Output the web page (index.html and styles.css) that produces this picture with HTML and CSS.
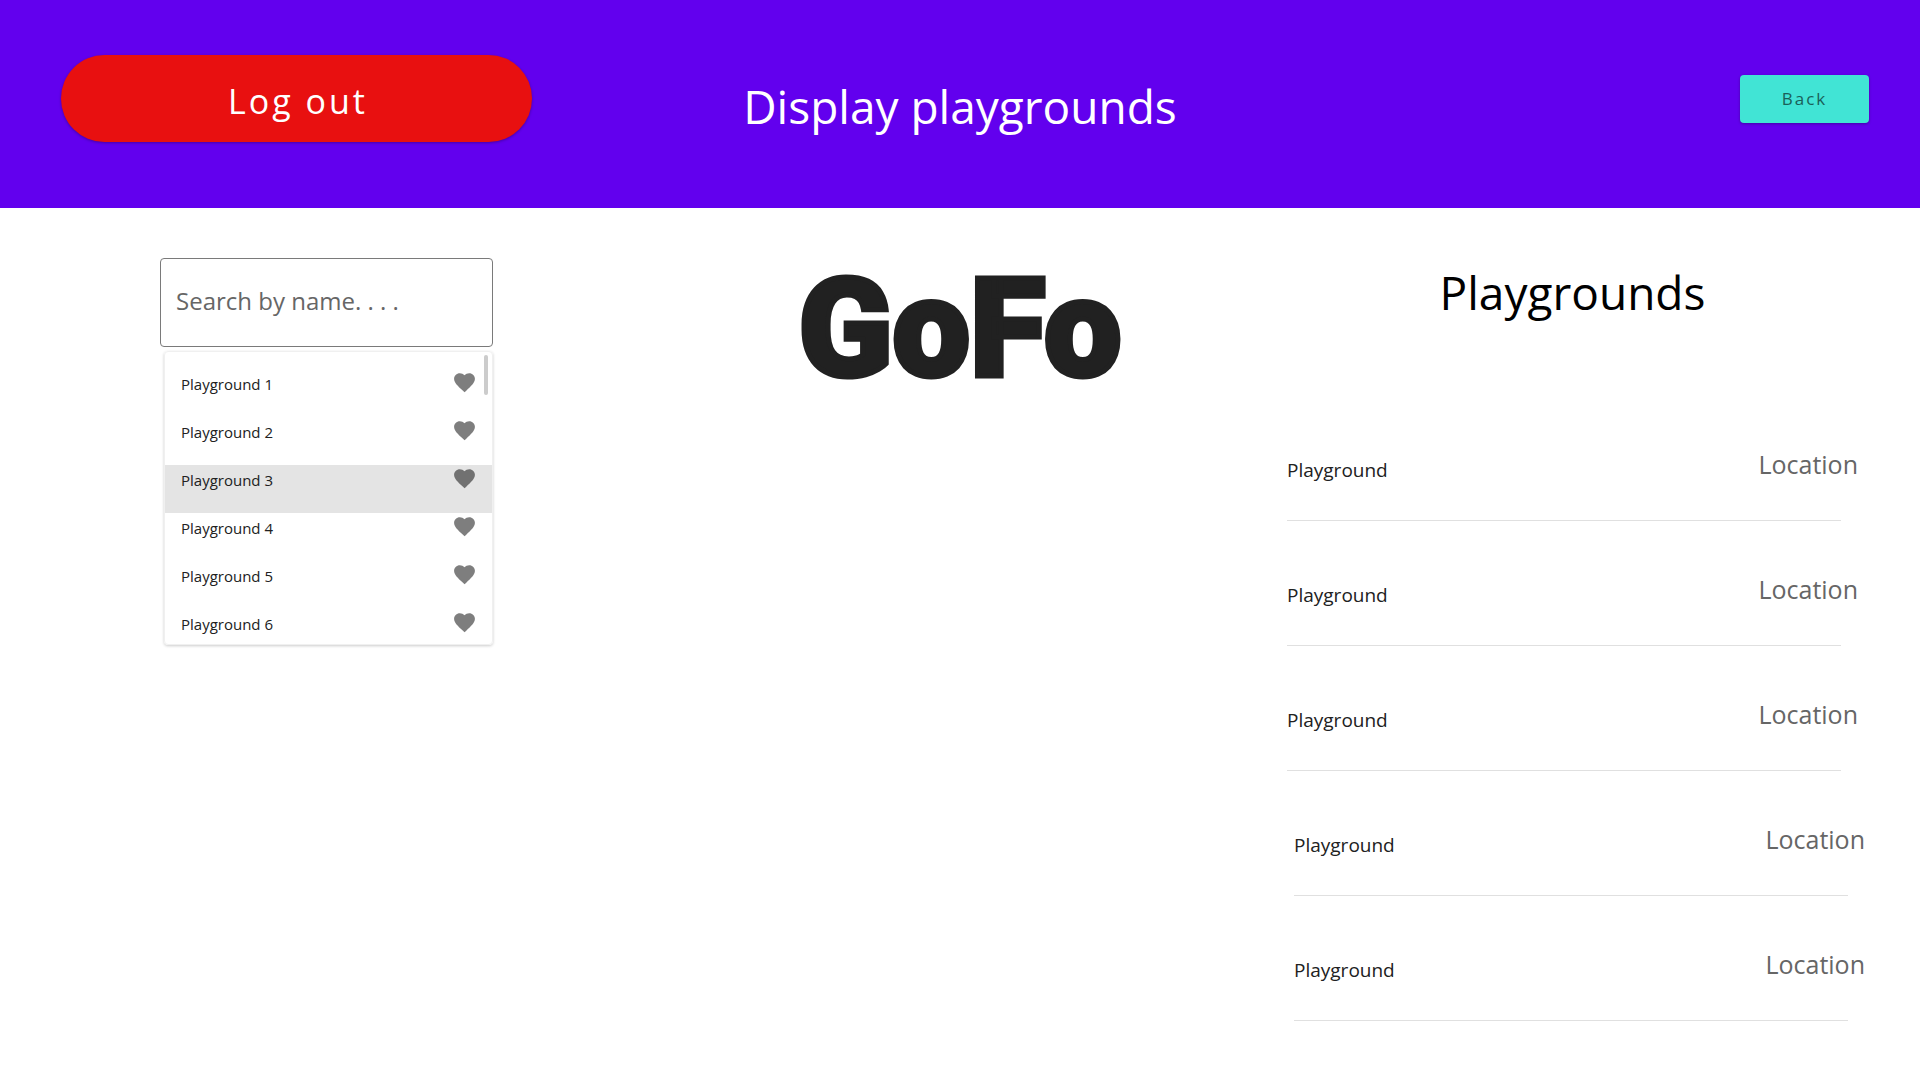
FILE: index.html
```html
<!DOCTYPE html>
<html lang="en">
<head>
<meta charset="utf-8">
<meta name="viewport" content="width=device-width, initial-scale=1">
<title>Display playgrounds</title>
<link rel="stylesheet" href="styles.css">
</head>
<body>
<svg class="sprite" aria-hidden="true">
  <symbol id="heart" viewBox="0 0 24 24"><path d="M12 21.35l-1.45-1.32C5.4 15.36 2 12.28 2 8.5 2 5.42 4.42 3 7.5 3c1.74 0 3.41.81 4.5 2.09C13.09 3.81 14.76 3 16.5 3 19.58 3 22 5.42 22 8.5c0 3.78-3.4 6.86-8.55 11.54L12 21.35z"/></symbol>
</svg>
<header class="top-bar">
  <button class="logout" type="button">Log out</button>
  <h1 class="title">Display playgrounds</h1>
  <button class="back" type="button">Back</button>
</header>
<main class="content">
  <section class="search" aria-label="Search">
    <input class="search-field" type="text" placeholder="Search by name. . . ." aria-label="Search by name">
    <div class="menu">
      <ul class="menu-list">
        <li class="menu-item">Playground 1<svg class="heart"><use href="#heart"/></svg></li>
        <li class="menu-item">Playground 2<svg class="heart"><use href="#heart"/></svg></li>
        <li class="menu-item selected">Playground 3<svg class="heart"><use href="#heart"/></svg></li>
        <li class="menu-item">Playground 4<svg class="heart"><use href="#heart"/></svg></li>
        <li class="menu-item">Playground 5<svg class="heart"><use href="#heart"/></svg></li>
        <li class="menu-item">Playground 6<svg class="heart"><use href="#heart"/></svg></li>
      </ul>
      <span class="menu-thumb"></span>
    </div>
  </section>
  <p class="logo">GoFo</p>
  <section class="results">
    <h2 class="results-title">Playgrounds</h2>
    <ul class="results-list">
      <li class="result"><span class="name">Playground</span><span class="location">Location</span></li>
      <li class="result"><span class="name">Playground</span><span class="location">Location</span></li>
      <li class="result"><span class="name">Playground</span><span class="location">Location</span></li>
      <li class="result indented"><span class="name">Playground</span><span class="location">Location</span></li>
      <li class="result indented"><span class="name">Playground</span><span class="location">Location</span></li>
    </ul>
  </section>
</main>
</body>
</html>
```

FILE: styles.css
```css
* {
  box-sizing: border-box;
}

body {
  margin: 0;
  background: #fff;
  color: #212121;
  font-family: "Open Sans", "Noto Sans", sans-serif;
}

ul {
  margin: 0;
  padding: 0;
  list-style: none;
}

.sprite {
  display: none;
}

.top-bar {
  display: grid;
  grid-template-columns: 1fr auto 1fr;
  align-items: center;
  padding: 55px 51px 66px 61px;
  background: #6200ee;
  color: #fff;
}

.logout,
.back {
  border: 0;
  font-family: inherit;
}

.logout {
  width: 471px;
  max-width: 100%;
  height: 87px;
  padding: 5px 0 0 3px;
  border-radius: 44px;
  background: #e81010;
  box-shadow: 0 1px 3px rgba(0, 0, 0, 0.3);
  color: #fff;
  font-size: 34px;
  letter-spacing: 3px;
}

.title {
  margin: 14px 10px 0 0;
  font-size: 46px;
  font-weight: 400;
  line-height: 60px;
}

.back {
  justify-self: end;
  width: 129px;
  height: 48px;
  border-radius: 4px;
  background: #41e4d5;
  box-shadow: 0 1px 3px rgba(0, 0, 0, 0.3);
  color: #1b5f59;
  font-size: 17px;
  letter-spacing: 2px;
}

.content {
  display: grid;
  grid-template-columns: 1fr auto 1fr;
  align-items: start;
  padding-top: 50px;
}

.search {
  width: 333px;
  margin-left: 160px;
}

.search-field {
  display: block;
  width: 100%;
  height: 89px;
  padding: 0 15px 4px;
  border: 1px solid #7a7a7a;
  border-radius: 4px;
  background: #fff;
  font-family: inherit;
  font-size: 24px;
}

.search-field::placeholder {
  color: #666;
  opacity: 1;
}

.menu {
  position: relative;
  height: 294px;
  margin: 4px 0 0 4px;
  padding-top: 17px;
  overflow: hidden;
  border: 1px solid #f0f0f0;
  border-radius: 4px;
  box-shadow: 0 1px 3px rgba(0, 0, 0, 0.2);
}

.menu-item {
  display: flex;
  align-items: flex-start;
  justify-content: space-between;
  height: 48px;
  padding: 1px 15px 0 16px;
  font-size: 15px;
  line-height: 28px;
}

.menu-item.selected {
  background: #e4e4e4;
}

.heart {
  width: 25px;
  height: 25px;
  fill: #000;
  opacity: 0.5;
}

.menu-thumb {
  position: absolute;
  top: 3px;
  right: 4px;
  width: 4px;
  height: 40px;
  border-radius: 2px;
  background: #ccc;
}

.logo {
  margin: 0;
  padding-top: 1px;
  font-family: Roboto, sans-serif;
  font-size: 138px;
  font-weight: 900;
  line-height: 140px;
  -webkit-text-stroke: 5px #212121;
}

.results {
  justify-self: end;
  width: 571px;
  margin-right: 62px;
}

.results-title {
  margin: 0;
  color: #000;
  font-size: 46px;
  font-weight: 400;
  line-height: 68px;
  text-align: center;
}

.results-list {
  margin-top: 70px;
}

.result {
  display: grid;
  grid-template-columns: 1fr auto;
  align-items: start;
  height: 125px;
  padding-top: 50px;
}

.result::after {
  content: "";
  grid-column: 1 / -1;
  align-self: end;
  height: 1px;
  margin-right: 17px;
  background: #e0e0e0;
}

.result.indented {
  margin: 0 -7px 0 7px;
}

.name {
  font-size: 19px;
  line-height: 48px;
}

.location {
  color: #666;
  font-size: 25px;
  line-height: 36px;
}
```
